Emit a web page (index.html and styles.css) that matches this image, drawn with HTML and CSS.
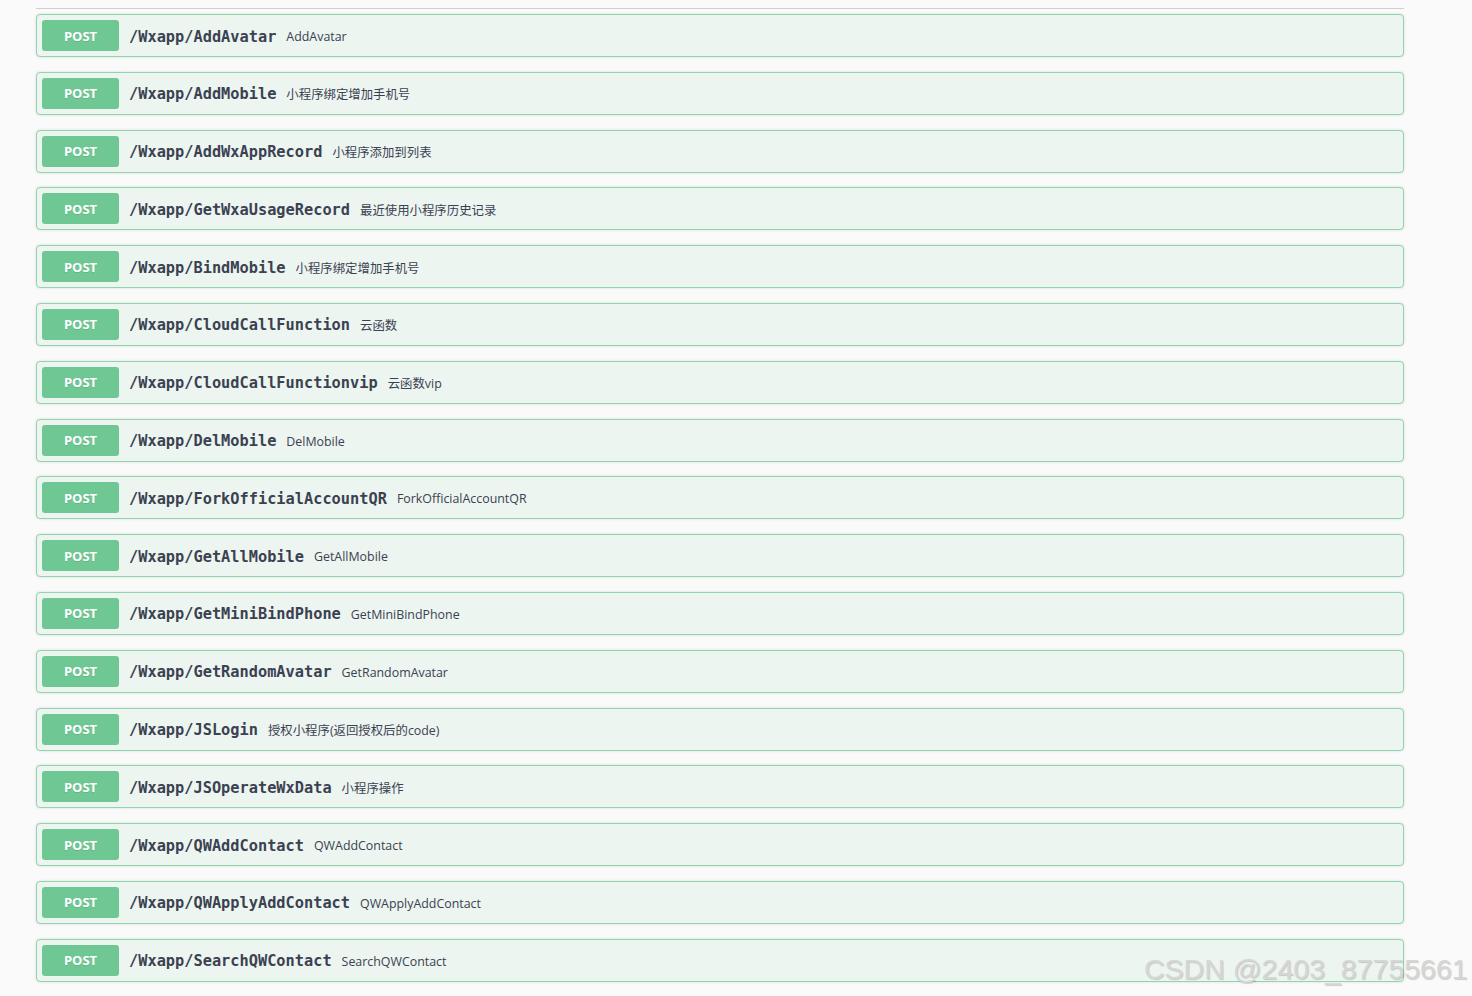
FILE: index.html
```html
<!DOCTYPE html>
<html lang="zh-CN">

<head>
  <meta charset="UTF-8">
  <meta name="viewport" content="width=device-width, initial-scale=1.0">
  <title>Wxapp API</title>
  <link rel="stylesheet" href="styles.css">
</head>

<body>
  <div class="tag-section">
    <div class="opblock">
      <span class="method">POST</span>
      <span class="path">/Wxapp/AddAvatar</span>
      <span class="summary">AddAvatar</span>
    </div>
    <div class="opblock">
      <span class="method">POST</span>
      <span class="path">/Wxapp/AddMobile</span>
      <span class="summary">小程序绑定增加手机号</span>
    </div>
    <div class="opblock">
      <span class="method">POST</span>
      <span class="path">/Wxapp/AddWxAppRecord</span>
      <span class="summary">小程序添加到列表</span>
    </div>
    <div class="opblock">
      <span class="method">POST</span>
      <span class="path">/Wxapp/GetWxaUsageRecord</span>
      <span class="summary">最近使用小程序历史记录</span>
    </div>
    <div class="opblock">
      <span class="method">POST</span>
      <span class="path">/Wxapp/BindMobile</span>
      <span class="summary">小程序绑定增加手机号</span>
    </div>
    <div class="opblock">
      <span class="method">POST</span>
      <span class="path">/Wxapp/CloudCallFunction</span>
      <span class="summary">云函数</span>
    </div>
    <div class="opblock">
      <span class="method">POST</span>
      <span class="path">/Wxapp/CloudCallFunctionvip</span>
      <span class="summary">云函数vip</span>
    </div>
    <div class="opblock">
      <span class="method">POST</span>
      <span class="path">/Wxapp/DelMobile</span>
      <span class="summary">DelMobile</span>
    </div>
    <div class="opblock">
      <span class="method">POST</span>
      <span class="path">/Wxapp/ForkOfficialAccountQR</span>
      <span class="summary">ForkOfficialAccountQR</span>
    </div>
    <div class="opblock">
      <span class="method">POST</span>
      <span class="path">/Wxapp/GetAllMobile</span>
      <span class="summary">GetAllMobile</span>
    </div>
    <div class="opblock">
      <span class="method">POST</span>
      <span class="path">/Wxapp/GetMiniBindPhone</span>
      <span class="summary">GetMiniBindPhone</span>
    </div>
    <div class="opblock">
      <span class="method">POST</span>
      <span class="path">/Wxapp/GetRandomAvatar</span>
      <span class="summary">GetRandomAvatar</span>
    </div>
    <div class="opblock">
      <span class="method">POST</span>
      <span class="path">/Wxapp/JSLogin</span>
      <span class="summary">授权小程序(返回授权后的code)</span>
    </div>
    <div class="opblock">
      <span class="method">POST</span>
      <span class="path">/Wxapp/JSOperateWxData</span>
      <span class="summary">小程序操作</span>
    </div>
    <div class="opblock">
      <span class="method">POST</span>
      <span class="path">/Wxapp/QWAddContact</span>
      <span class="summary">QWAddContact</span>
    </div>
    <div class="opblock">
      <span class="method">POST</span>
      <span class="path">/Wxapp/QWApplyAddContact</span>
      <span class="summary">QWApplyAddContact</span>
    </div>
    <div class="opblock">
      <span class="method">POST</span>
      <span class="path">/Wxapp/SearchQWContact</span>
      <span class="summary">SearchQWContact</span>
    </div>
    <div class="section-end"></div>
  </div>

  <div class="watermark">CSDN @2403_87755661</div>
</body>

</html>
```

FILE: styles.css
```css
* {
  margin: 0;
  padding: 0;
  box-sizing: border-box;
}

body {
  background: #fafafa;
  color: #3b4151;
  font-family: 'Open Sans', 'Noto Sans CJK SC', sans-serif;
  height: 996px;
  overflow: hidden;
}

.tag-section {
  width: 1368px;
  margin-left: 36px;
  padding-top: 8px;
}

.tag-section::before {
  content: '';
  display: block;
  height: 1px;
  background: #cfcfcf;
  margin-bottom: 5px;
}

.opblock {
  display: flex;
  align-items: center;
  height: 43px;
  margin-bottom: 14.8px;
  padding: 5px;
  background: #ecf5f0;
  border: 1px solid #8fd6ad;
  border-radius: 4px;
  box-shadow: 0 0 3px rgba(0, 0, 0, 0.12);
}

.method {
  display: flex;
  align-items: center;
  justify-content: center;
  width: 77px;
  height: 31px;
  flex-shrink: 0;
  background: #6fc793;
  color: #fff;
  border-radius: 3px;
  font-family: 'Open Sans', sans-serif;
  font-size: 13px;
  font-weight: 700;
  text-shadow: 0 1px 0 rgba(0, 0, 0, 0.1);
}

.path {
  padding: 2px 10px 0;
  font-family: 'DejaVu Sans Mono', monospace;
  font-size: 15.3px;
  font-weight: 700;
  color: #3b4151;
}

.summary {
  padding-top: 2px;
  font-family: 'Open Sans', 'Noto Sans CJK SC', sans-serif;
  font-size: 12.4px;
  color: #3b4151;
}

.section-end {
  height: 1px;
  background: #e2e2e2;
  margin-top: -1px;
}

.watermark {
  position: absolute;
  left: 1144px;
  top: 953px;
  font-family: 'Liberation Sans', Arial, sans-serif;
  font-size: 28.5px;
  color: #d6d6d6;
  text-shadow: 1px 1px 1px rgba(0, 0, 0, 0.18);
  white-space: nowrap;
}
```
